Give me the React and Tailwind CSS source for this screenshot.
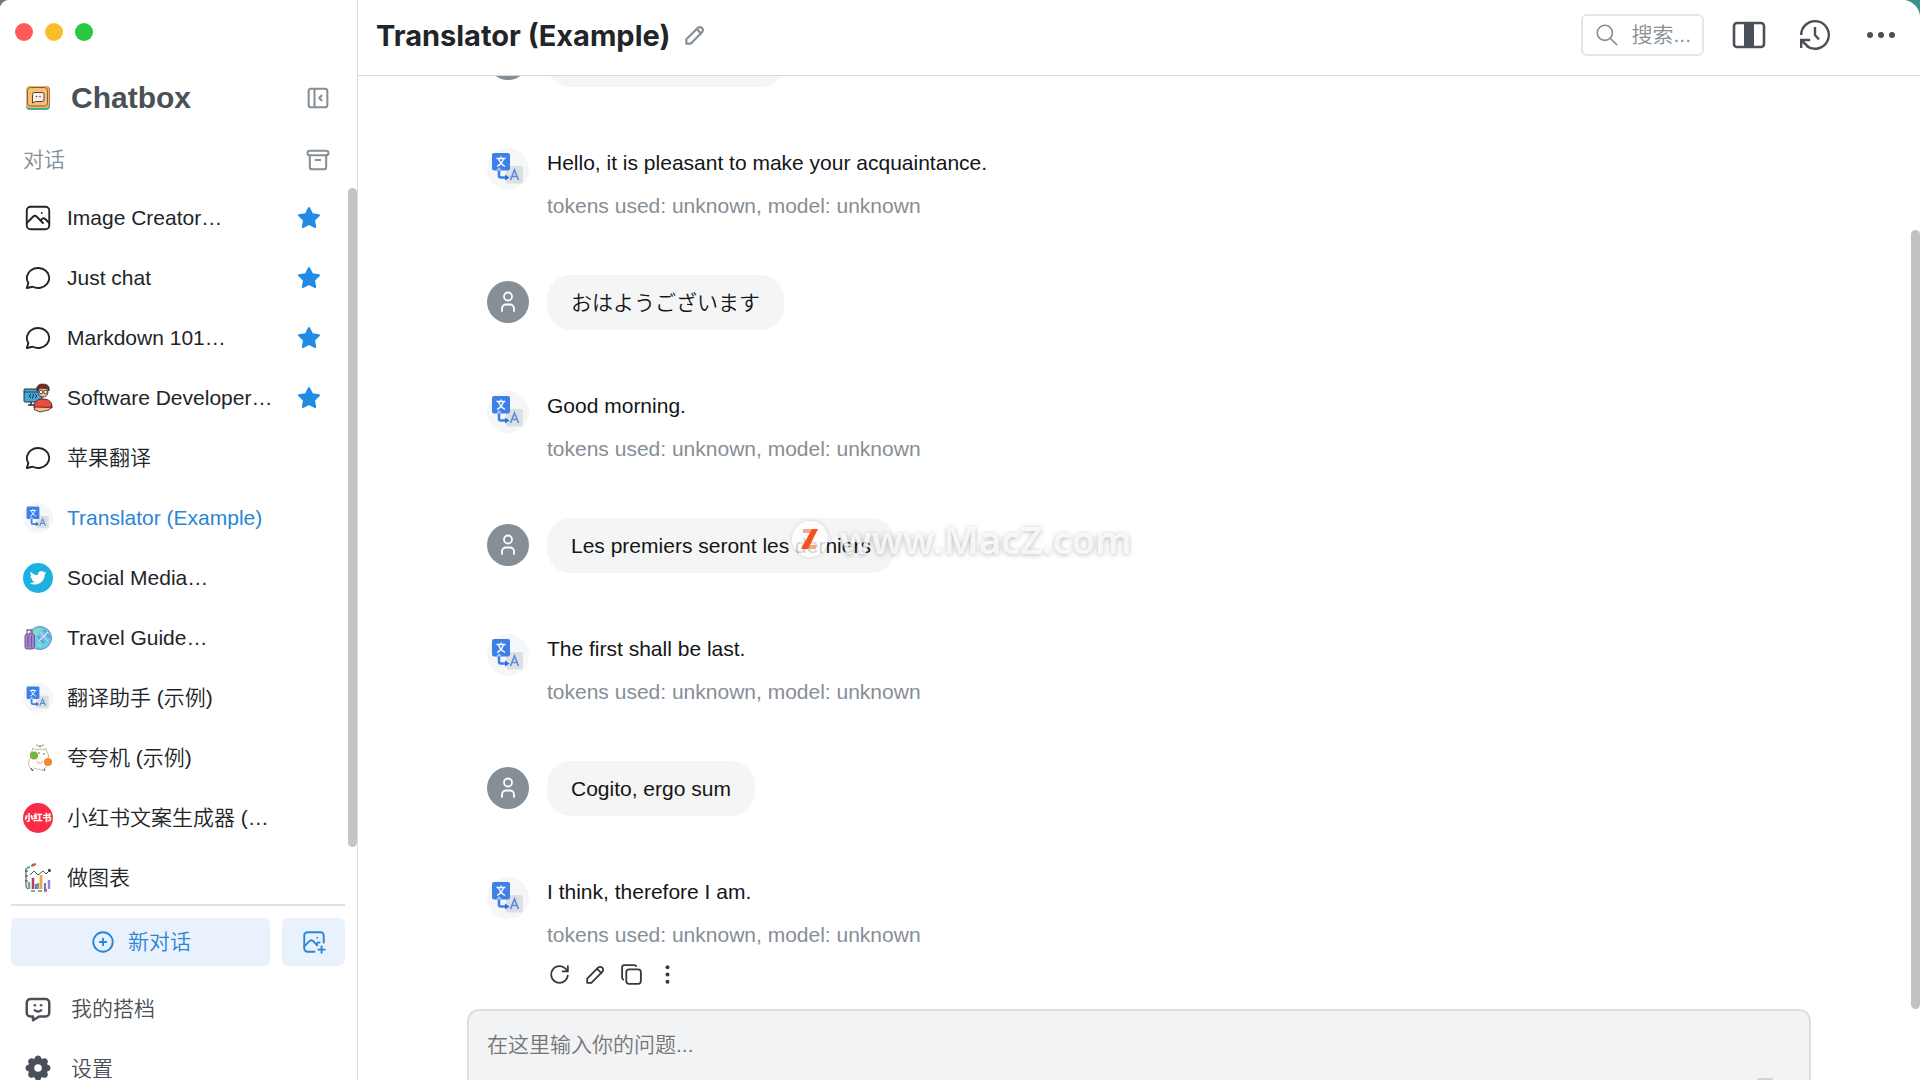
import React from "react";
import {
  TbLayoutSidebarLeftCollapse,
  TbArchive,
  TbPhoto,
  TbMessageCircle,
  TbStarFilled,
  TbCirclePlus,
  TbPhotoPlus,
  TbMessageChatbot,
  TbSettingsFilled,
  TbPencil,
  TbSearch,
  TbReload,
  TbCopy,
} from "react-icons/tb";

function ChatboxLogo() {
  return (
    <svg className="size-[30px]" viewBox="0 0 30 30" aria-hidden="true">
      <rect x="3" y="6" width="24" height="21" rx="4" fill="#4fa695" />
      <path d="M9 3h14a4 4 0 0 1 4 4v15h-4z" fill="#d9693f" />
      <rect x="3" y="3" width="23" height="22" rx="4" fill="#efb768" />
      <rect x="4.500" y="4.500" width="20" height="18.500" rx="3" fill="#f4bf78" stroke="#7a5530" strokeWidth="0.900" />
      <path d="M11 9.500h8a2 2 0 0 1 2 2v5a2 2 0 0 1-2 2h-6.500l-3 1.500v-8.500a2 2 0 0 1 1.500-2z" fill="#f9f1e6" stroke="#5a4232" strokeWidth="1" />
      <circle cx="13.500" cy="13.500" r="0.800" fill="#5a4232" />
      <circle cx="17" cy="13.500" r="0.800" fill="#5a4232" />
    </svg>
  );
}

function TranslateLogo({ className }) {
  return (
    <svg className={className} viewBox="0 0 42 42" aria-hidden="true">
      <circle cx="21" cy="21" r="21" fill="#f5f6f7" />
      <rect x="19" y="18" width="17" height="17.500" rx="2" fill="#dcdfe3" />
      <rect x="5" y="5" width="18" height="17.500" rx="2" fill="#3f7fe8" />
      <path d="M9.500 10.500h9M14 8.500v2M16.500 10.500c-.8 3.500-3 6-6.500 8M11.500 10.500c.9 3.300 3 6 6.500 8" fill="none" stroke="#fff" strokeWidth="1.300" />
      <path d="M12 21v6.500a2 2 0 0 0 2 2h5" fill="none" stroke="#3f7fe8" strokeWidth="2.600" />
      <path d="M9 22.500l3-3.500 3 3.500z" fill="#9fc3f7" />
      <path d="M18 26.500l4.500 3-4.500 3z" fill="#2f6fdc" />
      <path d="M23.500 32l4-10 4 10M25 28.500h5" fill="none" stroke="#5b8ddb" strokeWidth="1.600" />
    </svg>
  );
}

function DeveloperIcon() {
  return (
    <svg className="size-[30px]" viewBox="0 0 30 30" aria-hidden="true">
      <rect x="1" y="6" width="18" height="13" rx="1" fill="#4aa6d3" stroke="#173447" />
      <path d="M1 9h18" stroke="#173447" strokeWidth="0.800" />
      <path d="M8 11l-2 2 2 2M12 11l2 2-2 2M10.700 10.500l-1.400 5" fill="none" stroke="#173447" strokeWidth="1" />
      <path d="M5 22h7M8 19v3" stroke="#173447" strokeWidth="1.400" />
      <path d="M11 24c0-5 3-8 9-8s9 3 9 8v1H11z" fill="#ec4a3f" stroke="#43211d" strokeWidth="0.900" />
      <circle cx="20" cy="9" r="5" fill="#f6bd93" stroke="#43211d" strokeWidth="0.800" />
      <path d="M14 8C12.500 3 16 .8 20 1c5 0 7 3 6 7-1-1-1.500-2.500-2-3-2 .8-6 .5-8 0-.5 1-.8 2-2 3z" fill="#6b3427" stroke="#331511" strokeWidth="0.600" />
      <circle cx="18" cy="9" r="1.800" fill="#fff" stroke="#222" strokeWidth="0.800" />
      <circle cx="22.500" cy="9" r="1.800" fill="#fff" stroke="#222" strokeWidth="0.800" />
      <path d="M12 24l14 .5 3-1.500-3 4-9 2-6-2.500z" fill="#f6bd93" stroke="#43211d" strokeWidth="0.800" />
    </svg>
  );
}

function TwitterIcon() {
  return (
    <svg className="size-[30px]" viewBox="0 0 30 30" aria-hidden="true">
      <circle cx="15" cy="15" r="15" fill="#1fb0e2" />
      <g transform="translate(6.800 6.500) scale(0.690)">
        <path
          fill="#fff"
          d="M23.953 4.570a10 10 0 01-2.825.775 4.958 4.958 0 002.163-2.723c-.951.555-2.005.959-3.127 1.184a4.920 4.920 0 00-8.384 4.482C7.690 8.095 4.067 6.130 1.640 3.162a4.822 4.822 0 00-.666 2.475c0 1.710.870 3.213 2.188 4.096a4.904 4.904 0 01-2.228-.616v.060a4.923 4.923 0 003.946 4.827 4.996 4.996 0 01-2.212.085 4.936 4.936 0 004.604 3.417 9.867 9.867 0 01-6.102 2.105c-.390 0-.779-.023-1.170-.067a13.995 13.995 0 007.557 2.209c9.053 0 13.998-7.496 13.998-13.985 0-.210 0-.420-.015-.630A9.935 9.935 0 0024 4.590z"
        />
      </g>
    </svg>
  );
}

function TravelIcon() {
  return (
    <svg className="size-[30px]" viewBox="0 0 30 30" aria-hidden="true">
      <circle cx="17" cy="15" r="11.500" fill="#66cfe3" stroke="#6f88cc" strokeWidth="1" />
      <path d="M9 8c3-3 7-4 9-2s-2 4-3 6-5 1-6-4zM14 20c3-2 6 0 5 3s-4 2-5-3z" fill="#7fdcc4" />
      <path d="M16 18l9-9M17 9l8 9M21 7l6 8M15 13l6 7" stroke="#6f93dc" strokeWidth="2" />
      <path d="M16 18l9-9M17 9l8 9" stroke="#dff3fb" strokeWidth="1.100" />
      <path d="M4 12V7h5v5" fill="none" stroke="#8060a8" strokeWidth="1.300" />
      <rect x="2" y="11" width="9.500" height="15" rx="2" fill="#a583c9" stroke="#76559f" />
      <path d="M5 13v11M8.500 13v11" stroke="#76559f" strokeWidth="1.100" />
    </svg>
  );
}

function PraiseIcon() {
  return (
    <svg className="size-[30px]" viewBox="0 0 30 30" aria-hidden="true">
      <path
        d="M9 8l1-3 3 2c3-1 6-1 8 0l2-2 1 4c2 3 2 5 1 8 0 5-2 9-5 9l-1 2-2-2c-2 1-4 0-5-1l-3 3-2-3c-2-3-2-8 1-11C7 12 7 10 9 8z"
        fill="#fffdf8"
        stroke="#b5a992"
        strokeWidth="0.800"
      />
      <path d="M17 4V2m0 2c-2-2-4-2-4-2m4 2c2-2 4-2 4-2" fill="none" stroke="#9b8744" strokeWidth="1" />
      <circle cx="16" cy="10" r="0.700" fill="#333" />
      <circle cx="21" cy="11" r="0.700" fill="#333" />
      <path d="M14 18c1 3 4 3 6 0" fill="none" stroke="#a3947a" strokeWidth="0.800" />
      <path d="M8 25l2 3M21 28l1-2" fill="none" stroke="#4b4238" strokeWidth="1" />
      <circle cx="11" cy="12.500" r="4" fill="#74b63b" />
      <circle cx="25" cy="19" r="4" fill="#f0882d" />
    </svg>
  );
}

function RedBookIcon() {
  return (
    <span className="flex size-[30px] items-center justify-center overflow-hidden rounded-full bg-[#fa2c45] text-[9px] leading-none font-black whitespace-nowrap text-white">
      小红书
    </span>
  );
}

function ChartIcon() {
  return (
    <svg className="size-[30px]" viewBox="0 0 30 30" aria-hidden="true">
      <path d="M3 5v18a3 3 0 0 0 2 3M2 8h3M2 13h3M2 18h3M8 28h4M15 28h4M21 28h3" fill="none" stroke="#43414f" strokeWidth="1" />
      <path d="M4 5l3-1M8 3l4-1" stroke="#57b36d" strokeWidth="2" />
      <path d="M9 2l4-1" stroke="#dd5145" strokeWidth="2" />
      <path d="M7 12l4-4 4 4 5-4 3 3 4-4" fill="none" stroke="#55525f" strokeWidth="1" />
      <path d="M25 7h2v2" fill="none" stroke="#222" strokeWidth="1.300" />
      <path d="M6 26v-7M15 26v-6" stroke="#69aa80" strokeWidth="2.400" />
      <path d="M10 26V15" stroke="#b13f62" strokeWidth="2.600" />
      <path d="M13 26v-5M22 26v-6" stroke="#5586d8" strokeWidth="2.200" />
      <path d="M18 26V12" stroke="#f1a643" strokeWidth="2.800" />
      <path d="M26 26v-9" stroke="#8f86d7" strokeWidth="2.400" />
      <path d="M21 27h3" stroke="#e04680" strokeWidth="2" />
    </svg>
  );
}

const chats = [
  { name: "Image Creator…", icon: <TbPhoto className="size-[30px] stroke-[1.5]" />, starred: true },
  { name: "Just chat", icon: <TbMessageCircle className="size-[30px] stroke-[1.5]" />, starred: true },
  { name: "Markdown 101…", icon: <TbMessageCircle className="size-[30px] stroke-[1.5]" />, starred: true },
  { name: "Software Developer…", icon: <DeveloperIcon />, starred: true },
  { name: "苹果翻译", icon: <TbMessageCircle className="size-[30px] stroke-[1.5]" /> },
  { name: "Translator (Example)", icon: <TranslateLogo className="size-[30px]" />, active: true },
  { name: "Social Media…", icon: <TwitterIcon /> },
  { name: "Travel Guide…", icon: <TravelIcon /> },
  { name: "翻译助手 (示例)", icon: <TranslateLogo className="size-[30px]" /> },
  { name: "夸夸机 (示例)", icon: <PraiseIcon /> },
  { name: "小红书文案生成器 (…", icon: <RedBookIcon /> },
  { name: "做图表", icon: <ChartIcon /> },
];

const messages = [
  { role: "user", text: "" },
  { role: "bot", text: "Hello, it is pleasant to make your acquaintance." },
  { role: "user", text: "おはようございます", lang: "ja" },
  { role: "bot", text: "Good morning." },
  { role: "user", text: "Les premiers seront les derniers" },
  { role: "bot", text: "The first shall be last." },
  { role: "user", text: "Cogito, ergo sum" },
  { role: "bot", text: "I think, therefore I am.", actions: true },
];

function Sidebar() {
  return (
    <aside className="flex w-[358px] shrink-0 flex-col border-r border-[#dcdddf] bg-white">
      <div className="flex shrink-0 gap-3 px-[15px] pt-[23px]">
        <button aria-label="Close" className="size-[18px] rounded-full bg-[#fc5b57]" />
        <button aria-label="Minimize" className="size-[18px] rounded-full bg-[#fdbc2e]" />
        <button aria-label="Zoom" className="size-[18px] rounded-full bg-[#28c840]" />
      </div>
      <div className="mt-[37px] flex h-10 shrink-0 items-center pr-[25px] pl-[23px] text-[#495057]">
        <ChatboxLogo />
        <h1 className="ml-[18px] flex-1 text-[30px] leading-10 font-bold">Chatbox</h1>
        <button aria-label="Collapse sidebar" className="text-[#868e96]">
          <TbLayoutSidebarLeftCollapse className="size-7 stroke-[1.75]" />
        </button>
      </div>
      <div className="mt-[22px] flex h-10 shrink-0 items-center justify-between pr-[25px] pl-[23px] text-[#868e96]">
        <span>对话</span>
        <button aria-label="Archive">
          <TbArchive className="size-7 stroke-[1.75]" />
        </button>
      </div>
      <div className="mt-2 flex min-h-0 flex-1 overflow-hidden">
        <nav className="min-w-0 flex-1">
          {chats.map((chat) => (
            <a
              key={chat.name}
              href="#"
              className={
                chat.active
                  ? "flex h-[60px] items-center gap-[14px] pr-[27px] pl-[23px] text-[#2a86d6]"
                  : "flex h-[60px] items-center gap-[14px] pr-[27px] pl-[23px] text-[#212529]"
              }
            >
              <span className="shrink-0">{chat.icon}</span>
              <span className="min-w-0 flex-1 whitespace-nowrap">{chat.name}</span>
              {chat.starred && <TbStarFilled className="size-6 shrink-0 text-[#228be6]" />}
            </a>
          ))}
        </nav>
        <div className="h-[92%] w-[9px] shrink-0 rounded-full bg-[#c4c4c4]" />
      </div>
      <div className="shrink-0 pr-3 pl-[11px] text-[#495057]">
        <div className="flex gap-3 border-t-2 border-[#e0e1e2] pt-3 text-[#2a86d6]">
          <button className="flex h-12 flex-1 items-center justify-center gap-3 rounded-md bg-[#e9f1fc]">
            <TbCirclePlus className="size-[26px] stroke-[1.75]" />
            <span>新对话</span>
          </button>
          <button aria-label="New image" className="flex h-12 w-[63px] items-center justify-center rounded-md bg-[#e9f1fc]">
            <TbPhotoPlus className="size-[26px] stroke-[1.75]" />
          </button>
        </div>
        <a href="#" className="mt-[13px] flex h-[60px] items-center gap-[18px] pl-3">
          <TbMessageChatbot className="size-[30px]" />
          我的搭档
        </a>
        <a href="#" className="flex h-[41px] items-start gap-[18px] overflow-hidden pt-[14px] pl-3">
          <TbSettingsFilled className="size-[30px] shrink-0" />
          <span className="leading-8">设置</span>
        </a>
      </div>
    </aside>
  );
}

function Header() {
  return (
    <header className="flex h-[76px] shrink-0 items-center border-b border-[#d8d9db] pr-6 pb-[5px] pl-[18px] text-[#495057]">
      <h2 className="pt-px font-['Inter'] text-[29px] font-bold whitespace-nowrap text-[#212529]">Translator (Example)</h2>
      <button aria-label="Rename" className="ml-3 text-[#868e96]">
        <TbPencil className="size-[26px]" />
      </button>
      <button className="ml-auto flex h-[42px] items-center gap-2 rounded-md border-2 border-[#e3e6e9] pr-[11px] pl-2 text-[#868e96]">
        <span className="flex w-8 justify-center">
          <TbSearch className="size-[26px] stroke-[1.5]" />
        </span>
        搜索...
      </button>
      <button aria-label="Toggle width" className="ml-7">
        <svg className="h-[28px] w-[34px]" viewBox="0 0 34 28" aria-hidden="true">
          <rect x="2" y="2" width="30" height="24" rx="3" fill="none" stroke="currentColor" strokeWidth="2.600" />
          <rect x="12" y="2" width="10" height="24" fill="currentColor" />
        </svg>
      </button>
      <button aria-label="History" className="ml-8">
        <svg className="size-[34px]" viewBox="0 0 34 34" fill="none" stroke="currentColor" strokeWidth="2.400" aria-hidden="true">
          <path d="M3.200 17A13.800 13.800 0 1 1 9 28.200" />
          <path d="M3.200 30v-8h9M3.500 22.500l6.500 6M17 9v8l4 4.500" />
        </svg>
      </button>
      <button aria-label="More" className="ml-[34px]">
        <svg className="h-[34px] w-[30px]" viewBox="0 0 30 34" fill="currentColor" aria-hidden="true">
          <circle cx="4" cy="17" r="3" />
          <circle cx="15" cy="17" r="3" />
          <circle cx="26" cy="17" r="3" />
        </svg>
      </button>
    </header>
  );
}

function UserAvatar() {
  return (
    <span className="mt-[6px] flex size-[42px] shrink-0 items-center justify-center rounded-full bg-[#868e96]">
      <svg className="size-6" viewBox="0 0 24 24" fill="none" stroke="#fff" strokeWidth="1.800" strokeLinecap="round" aria-hidden="true">
        <circle cx="12" cy="6.500" r="4" />
        <path d="M6 21v-2.500a4 4 0 0 1 4-4h4a4 4 0 0 1 4 4V21" />
      </svg>
    </span>
  );
}

function UserMessage({ message }) {
  return (
    <article className="flex gap-[18px] pb-[61px]">
      <UserAvatar />
      {message.text ? (
        <p lang={message.lang} className="h-[55px] rounded-3xl bg-[#f5f5f5] px-6 leading-[55px]">
          {message.text}
        </p>
      ) : (
        <p className="h-[55px] w-[238px] rounded-3xl bg-[#f5f5f5]" />
      )}
    </article>
  );
}

function BotMessage({ message }) {
  return (
    <article className={message.actions ? "flex gap-[18px] pb-[22px]" : "flex gap-[18px] pb-[54px]"}>
      <TranslateLogo className="size-[42px] shrink-0" />
      <div>
        <p className="leading-[30px]">{message.text}</p>
        <p className="mt-[13px] leading-[30px] text-[#868e96]">tokens used: unknown, model: unknown</p>
        {message.actions && (
          <div className="mt-3 flex gap-[11px] text-[#343a40]">
            <button aria-label="Regenerate">
              <TbReload className="size-[25px] stroke-[1.75]" />
            </button>
            <button aria-label="Edit">
              <TbPencil className="size-[25px] stroke-[1.75]" />
            </button>
            <button aria-label="Copy">
              <TbCopy className="size-[25px] stroke-[1.75]" />
            </button>
            <button aria-label="More actions">
              <svg className="size-[25px]" viewBox="0 0 24 24" fill="currentColor" aria-hidden="true">
                <circle cx="12" cy="5" r="1.900" />
                <circle cx="12" cy="12" r="1.900" />
                <circle cx="12" cy="19" r="1.900" />
              </svg>
            </button>
          </div>
        )}
      </div>
    </article>
  );
}

function Watermark() {
  return (
    <div className="pointer-events-none absolute top-[509px] left-[792px] flex h-[60px] items-center gap-3">
      <span className="flex size-9 items-center justify-center rounded-full bg-white/80 shadow-[0_0_4px_rgba(0,0,0,0.15)]">
        <svg className="size-6" viewBox="0 0 24 24" aria-hidden="true">
          <path d="M5 2h14l-2 4H5z" fill="#f9a386" />
          <path d="M4 18h14v4H4z" fill="#f9a386" />
          <path d="M14 2h6L10 22H3z" fill="#f4511e" />
        </svg>
      </span>
      <span className="font-['Noto_Sans'] text-[38px] leading-none font-semibold text-white/80 [text-shadow:0_1px_5px_rgba(0,0,0,0.28)]">
        www.MacZ.com
      </span>
    </div>
  );
}

export default function App() {
  return (
    <div className="h-screen overflow-hidden bg-linear-to-r from-[#777777] to-[#3f8f8d]">
      <div className="relative flex h-full overflow-hidden rounded-tl-[9px] rounded-tr-[18px] bg-white font-['Liberation_Sans','Noto_Sans_CJK_SC',sans-serif] text-[21px] font-[350] text-[#141517]">
        <Sidebar />
        <main className="flex min-w-0 flex-1 flex-col bg-white">
          <Header />
          <div className="flex min-h-0 flex-1">
            <div className="flex min-w-0 flex-1 flex-col">
              <section className="flex min-h-0 flex-1 flex-col justify-end overflow-hidden">
                <div className="mx-auto w-full max-w-[1344px] px-5">
                  {messages.map((message, index) =>
                    message.role === "user" ? (
                      <UserMessage key={index} message={message} />
                    ) : (
                      <BotMessage key={index} message={message} />
                    )
                  )}
                </div>
              </section>
              <div className="mx-auto flex h-[71px] w-full max-w-[1344px] shrink-0 flex-col overflow-hidden rounded-t-xl border-2 border-b-0 border-[#dcdfe2] bg-[#f1f3f5]">
                <textarea
                  aria-label="在这里输入你的问题..."
                  placeholder="在这里输入你的问题..."
                  className="block h-[67px] w-full resize-none overflow-hidden bg-transparent px-[18px] pt-[18px] leading-8 outline-none placeholder:text-[#757575]"
                />
                <span className="mr-9 h-[2px] w-4 shrink-0 self-end rounded-t-full bg-[#ced4da]" />
              </div>
            </div>
            <div className="-ml-[9px] mt-[154px] mb-[71px] w-[9px] shrink-0 rounded-full bg-[#c1c1c1]" />
          </div>
        </main>
        <Watermark />
      </div>
    </div>
  );
}
